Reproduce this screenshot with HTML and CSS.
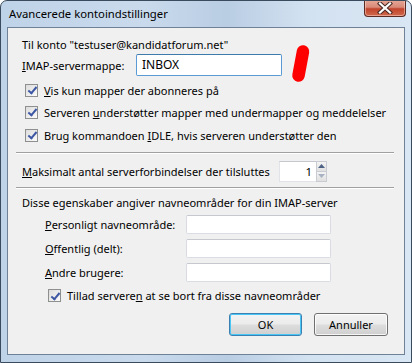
FILE: index.html
```html
<!DOCTYPE html>
<html>
<head>
<meta charset="utf-8">
<link rel="stylesheet" href="styles.css">
</head>
<body>
<div class="window">
  <div class="titlebar">
    <span class="title">Avancerede kontoindstillinger</span>
    <div class="close">
      <svg width="20" height="12" viewBox="0 0 20 12"><path d="M5 1.5 L15 10.5 M15 1.5 L5 10.5" stroke="#4a2a24" stroke-width="4.2" stroke-linecap="square"/><path d="M5 1.5 L15 10.5 M15 1.5 L5 10.5" stroke="#ffffff" stroke-width="2.2" stroke-linecap="square"/></svg>
    </div>
  </div>
  <div class="client">
    <div class="row r-account">Til konto "testuser@kandidatforum.net"</div>
    <div class="row r-imap">
      <span class="lbl-imap"><u>I</u>MAP-servermappe:</span>
      <div class="textbox tb-imap focused">INBOX</div>
    </div>
    <div class="row r-check c1"><span class="cb"></span><span><u>V</u>is kun mapper der abonneres på</span></div>
    <div class="row r-check c2"><span class="cb"></span><span>Serveren <u>u</u>nderstøtter mapper med undermapper og meddelelser</span></div>
    <div class="row r-check c3"><span class="cb"></span><span>Brug kommandoen <u>I</u>DLE, hvis serveren understøtter den</span></div>
    <div class="sep s1"></div>
    <div class="row r-max">
      <span class="lbl-max"><u>M</u>aksimalt antal serverforbindelser der tilsluttes</span>
      <div class="spin">
        <div class="spin-val">1</div>
        <div class="spin-btns">
          <div class="sb up"><svg width="7" height="4" viewBox="0 0 7 4"><path d="M0 4 L3.5 0 L7 4Z" fill="#4d6185"/></svg></div>
          <div class="sb down"><svg width="7" height="4" viewBox="0 0 7 4"><path d="M0 0 L3.5 4 L7 0Z" fill="#a8b2c2"/></svg></div>
        </div>
      </div>
    </div>
    <div class="sep s2"></div>
    <div class="row r-ns">Disse egenskaber angiver navneområder for din IMAP-server</div>
    <div class="ns-grid">
      <span class="ns-lbl"><u>P</u>ersonligt navneområde:</span><div class="textbox tb-ns"></div>
      <span class="ns-lbl"><u>O</u>ffentlig (delt):</span><div class="textbox tb-ns"></div>
      <span class="ns-lbl"><u>A</u>ndre brugere:</span><div class="textbox tb-ns"></div>
    </div>
    <div class="row r-check c4"><span class="cb"></span><span>Tillad servere<u>n</u> at se bort fra disse navneområder</span></div>
    <div class="buttons">
      <div class="btn default">OK</div>
      <div class="btn">Annuller</div>
    </div>
  </div>
  <svg class="marker" width="20" height="44" viewBox="0 0 20 44"><path d="M12 7.5 L7.5 31.5" stroke="#ff0000" stroke-width="12.5" stroke-linecap="round"/></svg>
</div>
</body>
</html>
```
FILE: styles.css
```css
html, body {
  margin: 0;
  padding: 0;
  background: #ffffff;
}
body {
  font-family: "Noto Sans", "Open Sans", sans-serif;
  font-size: 11px;
  color: #000;
}
.window {
  position: relative;
  width: 412px;
  height: 363px;
  box-sizing: border-box;
  border: 1px solid #3b4b5e;
  border-radius: 7px 7px 0 0;
  background: linear-gradient(90deg, #bfd3e8 0%, #c9daec 35%, #b9cde3 55%, #d3e2f1 75%, #d9e6f3 100%);
  display: flex;
  flex-direction: column;
  overflow: hidden;
}
.titlebar {
  height: 26px;
  flex: none;
  display: flex;
  align-items: flex-start;
  justify-content: space-between;
}
.title {
  margin: 5px 0 0 8px;
  line-height: 16px;
  font-size: 11.3px;
  color: #000;
}
.close {
  width: 42px;
  height: 17px;
  margin-right: 5px;
  margin-top: -1px;
  box-sizing: border-box;
  border: 1px solid #5b2a22;
  border-top: none;
  border-radius: 0 0 4px 4px;
  background: linear-gradient(180deg, #e7a898 0%, #d98a78 45%, #c2442c 55%, #cf6a4c 100%);
  box-shadow: inset 0 0 0 1px rgba(255,220,210,0.5);
  display: flex;
  align-items: center;
  justify-content: center;
}
.client {
  flex: 1;
  margin: 0 6px 7px 6px;
  border: 1px solid #6f8196;
  background: #f0f0f0;
  display: flex;
  flex-direction: column;
  padding: 0 10px 0 14px;
}
.row {
  display: flex;
  align-items: center;
  white-space: nowrap;
}
.r-account { margin-top: 8px; height: 17px; }
.r-imap { margin-top: 1px; height: 22px; }
.lbl-imap { width: 114px; }
.textbox {
  box-sizing: border-box;
  background: #fff;
  border: 1px solid #d9dde3;
  border-top-color: #c5c9cf;
  border-radius: 2px;
}
.tb-imap {
  width: 146px;
  height: 22px;
  padding: 2px 0 0 5px;
  font-size: 12px;
  line-height: 16px;
}
.tb-imap.focused {
  border-color: #5b9bd5;
  border-top-color: #3d7bad;
}
.r-check { height: 22px; }
.c1 { margin-top: 3px; }
.c3 { margin-top: 1px; }
.cb {
  width: 13px;
  height: 13px;
  box-sizing: border-box;
  border: 1px solid #8e8f8f;
  background: linear-gradient(135deg, #dcdcdc, #fbfbfb);
  margin: 0 6px 0 3px;
  position: relative;
  flex: none;
}
.cb::after {
  content: "";
  position: absolute;
  left: 3.5px;
  top: 0.5px;
  width: 3px;
  height: 7px;
  border: solid #3d57a4;
  border-width: 0 2px 2px 0;
  transform: rotate(40deg);
}
.sep {
  height: 0;
  border-top: 1px solid #a0a0a0;
  border-bottom: 1px solid #ffffff;
  margin-left: -6px;
}
.s1 { margin-top: 6px; }
.r-max { margin-top: 6px; height: 22px; }
.lbl-max { width: 257px; }
.spin { display: flex; height: 21px; }
.spin-val {
  width: 37px;
  box-sizing: border-box;
  background: #fff;
  border: 1px solid #e0e3e7;
  border-top-color: #c5c9cf;
  border-right: none;
  text-align: right;
  padding-right: 4px;
  font-size: 11.5px;
  line-height: 19px;
}
.spin-btns { width: 11px; display: flex; flex-direction: column; }
.sb {
  flex: 1;
  box-sizing: border-box;
  border: 1px solid #c8ccd2;
  background: linear-gradient(180deg, #f4f4f4, #e0e0e0);
  display: flex;
  align-items: center;
  justify-content: center;
}
.sb.down { border-top: none; }
.s2 { margin-top: 5px; }
.r-ns { margin-top: 5px; height: 17px; }
.ns-grid {
  display: grid;
  grid-template-columns: 141px 145px;
  grid-auto-rows: 19px;
  row-gap: 5px;
  margin: 4px 0 0 23px;
  align-items: center;
  white-space: nowrap;
}
.tb-ns { height: 19px; }
.c4 { margin-top: 5px; height: 17px; padding-left: 23px; }
.buttons {
  display: flex;
  justify-content: flex-end;
  gap: 12px;
  margin-top: 9px;
  padding-right: 6px;
}
.btn {
  width: 73px;
  height: 23px;
  box-sizing: border-box;
  border: 1px solid #707070;
  border-radius: 3px;
  background: linear-gradient(180deg, #f3f3f3 0%, #ebebeb 48%, #dddddd 52%, #cfcfcf 100%);
  box-shadow: inset 0 0 0 1px rgba(255,255,255,0.8);
  text-align: center;
  line-height: 21px;
}
.btn.default {
  border-color: #3c7fb1;
  box-shadow: inset 0 0 0 1px #48c7f7;
}
.btn:last-child { width: 74px; }
.marker {
  position: absolute;
  left: 290px;
  top: 43px;
}
```
